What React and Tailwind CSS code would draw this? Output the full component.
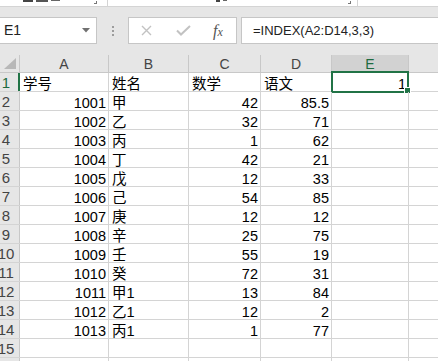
import React from 'react';

const cols = [
  { key: 'A', w: 'w-[89px]' },
  { key: 'B', w: 'w-[80px]' },
  { key: 'C', w: 'w-[72px]' },
  { key: 'D', w: 'w-[71px]' },
  { key: 'E', w: 'w-[77px]' },
  { key: 'F', w: 'w-[90px]' },
];

// [A, B, C, D]; strings go left, numbers go right
const data = [
  ['学号', '姓名', '数学', '语文'],
  [1001, '甲', 42, 85.5],
  [1002, '乙', 32, 71],
  [1003, '丙', 1, 62],
  [1004, '丁', 42, 21],
  [1005, '戊', 12, 33],
  [1006, '己', 54, 85],
  [1007, '庚', 12, 12],
  [1008, '辛', 25, 75],
  [1009, '壬', 55, 19],
  [1010, '癸', 72, 31],
  [1011, '甲1', 13, 84],
  [1012, '乙1', 12, 2],
  [1013, '丙1', 1, 77],
  [],
  [],
];

const fontStack = "font-['Liberation_Sans','Noto_Sans_CJK_SC',sans-serif]";

function Cell({ value, w, children }) {
  const isNum = typeof value === 'number';
  return (
    <div
      className={`relative ${w} shrink-0 h-full border-r border-[#d4d4d4] pt-[4px] leading-[15px] text-[14.5px] text-black whitespace-nowrap ${
        isNum ? 'text-right pr-[2px]' : 'text-left pl-[3px]'
      }`}
    >
      {value !== undefined ? String(value) : ''}
      {children}
    </div>
  );
}

export default function App() {
  return (
    <div className={`w-[438px] h-[361px] overflow-hidden bg-white ${fontStack}`}>
      {/* ribbon remnant: bottoms of group labels peek through */}
      <div className="h-[7px] border-b border-[#d4d4d4] bg-white flex">
        <div className="w-[108px] shrink-0 border-r border-[#d4d4d4] flex items-start pl-[23px] gap-[3px]">
          <div className="w-[10px] h-[2px] bg-[#444]" />
          <div className="w-[12px] h-[2px] bg-[#555]" />
          <div className="w-[9px] h-[1px] bg-[#666]" />
          <div className="ml-auto mr-[10px] mt-[1px] w-[3px] h-[3px] border-r border-b border-[#777]" />
        </div>
        <div className="w-[250px] shrink-0 border-r border-[#d4d4d4] flex items-start pl-[108px] gap-[3px]">
          <div className="w-[4px] h-[2px] bg-[#444]" />
          <div className="w-[4px] h-[1px] bg-[#666]" />
          <div className="ml-auto mr-[6px] mt-[1px] w-[3px] h-[3px] border-r border-b border-[#777]" />
        </div>
        <div className="flex-1" />
      </div>

      {/* formula bar */}
      <div className="h-[48px] bg-[#e6e6e6] pt-[10px] flex items-start">
        <div className="-ml-px w-[98px] h-[27px] shrink-0 bg-white border border-[#c6c6c6] flex items-center justify-between pl-[4px] pr-[6px]">
          <span className="text-[14px] text-[#222]">E1</span>
          <svg width="8" height="5" viewBox="0 0 8 5">
            <path d="M0 0 L8 0 L4 4.5 Z" fill="#707070" />
          </svg>
        </div>
        <div className="ml-[15px] h-[27px] flex flex-col justify-center gap-[2px]">
          <div className="w-[2px] h-[2px] bg-[#9c9c9c]" />
          <div className="w-[2px] h-[2px] bg-[#9c9c9c]" />
          <div className="w-[2px] h-[2px] bg-[#9c9c9c]" />
        </div>
        <div className="ml-[14px] w-[109px] h-[27px] shrink-0 bg-white border border-[#c6c6c6] flex items-center pl-[12px]">
          <svg width="11" height="11" viewBox="0 0 11 11">
            <path d="M1 1 L10 10 M10 1 L1 10" stroke="#c2c2c2" strokeWidth="1.4" />
          </svg>
          <svg className="ml-[24px]" width="15" height="11" viewBox="0 0 15 11">
            <path d="M1 5.5 L5 9.5 L14 1" stroke="#c2c2c2" strokeWidth="2" fill="none" />
          </svg>
          <span className="ml-[22px] font-['Liberation_Serif',serif] italic text-[16px] text-[#555] leading-none">
            f<span className="text-[12px]">x</span>
          </span>
        </div>
        <div className="ml-[4px] flex-1 -mr-[4px] h-[27px] bg-white border border-[#c6c6c6] flex items-center pl-[11px]">
          <span className="text-[13px] text-[#222]">=INDEX(A2:D14,3,3)</span>
        </div>
      </div>

      {/* column headers */}
      <div className="flex h-[18px] bg-[#e6e6e6] border-b border-[#c8c8c8]">
        <div className="relative w-[20px] shrink-0 h-full border-r border-[#c8c8c8]">
          <svg className="absolute right-[3px] bottom-[3px]" width="12" height="11" viewBox="0 0 12 11">
            <path d="M12 0 L12 11 L0 11 Z" fill="#b8b8b8" />
          </svg>
        </div>
        {cols.map(c => (
          <div
            key={c.key}
            className={`${c.w} shrink-0 h-full border-r border-[#c8c8c8] text-center text-[14px] leading-[18px] ${
              c.key === 'E' ? 'bg-[#d2d2d2] text-[#1e6b40]' : 'text-[#444]'
            }`}
          >
            {c.key === 'F' ? '' : c.key}
          </div>
        ))}
      </div>

      {/* rows */}
      {data.map((row, i) => (
        <div key={i} className="flex h-[19px] border-b border-[#d4d4d4]">
          <div
            className={`w-[20px] shrink-0 h-full overflow-hidden bg-[#e6e6e6] border-r ${
              i === 0 ? 'border-[#217346] border-r-2' : 'border-[#c8c8c8]'
            }`}
          >
            <div
              className={`w-[28px] -ml-[8px] text-center text-[15px] leading-[19px] ${
                i === 0 ? 'text-[#1e6b40]' : 'text-[#444]'
              }`}
            >
              {i + 1}
            </div>
          </div>
          {cols.map((c, j) => {
            if (i === 0 && c.key === 'E') {
              return (
                <Cell key={c.key} value={1} w={c.w}>
                  <div className="absolute -left-px -top-[2px] w-[78px] h-[22px] border-2 border-[#217346] pointer-events-none" />
                  <div className="absolute -right-[3px] -bottom-[3px] w-[7px] h-[7px] bg-[#217346] border border-white" />
                </Cell>
              );
            }
            return <Cell key={c.key} value={row[j]} w={c.w} />;
          })}
        </div>
      ))}
    </div>
  );
}
